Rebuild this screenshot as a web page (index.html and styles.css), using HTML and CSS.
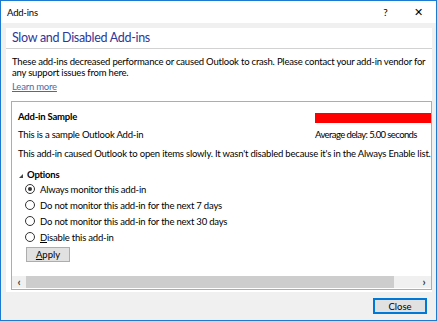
FILE: index.html
```html
<!DOCTYPE html>
<html lang="en">
<head>
    <meta charset="UTF-8">
    <title>Add-ins</title>
    <link rel="stylesheet" href="styles.css">
</head>
<body>
    <div class="window">
        <div class="titlebar">
            <span class="title">Add-ins</span>
            <span class="title-btn">?</span>
            <span class="title-btn close-x">&#x2715;</span>
        </div>

        <div class="content">
            <div class="panel">
                <h1>Slow and Disabled Add-ins</h1>
                <div class="intro">
                    <p>These add-ins decreased performance or caused Outlook to crash. Please contact your add-in vendor for any support issues from here.</p>
                    <a href="#" class="learn">Learn more</a>
                </div>

                <div class="list">
                    <div class="list-view">
                        <div class="item">
                            <div class="item-head">
                                <div class="item-name">
                                    <div class="name">Add-in Sample</div>
                                    <div class="desc">This is a sample Outlook Add-in</div>
                                </div>
                                <div class="delay">
                                    <div class="delay-bar"></div>
                                    <div class="delay-text">Average delay: 5.00 seconds</div>
                                </div>
                            </div>
                            <p class="reason">This add-in caused Outlook to open items slowly. It wasn't disabled because it's in the Always Enable list.</p>

                            <div class="options-head">
                                <span class="tri"></span>
                                <span>Options</span>
                            </div>
                            <div class="options">
                                <label class="radio"><span class="dot checked"></span>Always monitor this add-in</label>
                                <label class="radio"><span class="dot"></span>Do not monitor this add-in for the next 7 days</label>
                                <label class="radio"><span class="dot"></span>Do not monitor this add-in for the next 30 days</label>
                                <label class="radio"><span class="dot"></span><u>D</u>isable this add-in</label>
                            </div>
                            <button class="apply"><u>A</u>pply</button>
                        </div>
                    </div>

                    <div class="hscroll">
                        <span class="arrow">&#x2039;</span>
                        <span class="thumb"></span>
                        <span class="track"></span>
                        <span class="arrow">&#x203A;</span>
                    </div>
                </div>
            </div>

            <div class="footer">
                <button class="close-btn">Close</button>
            </div>
        </div>
    </div>
</body>
</html>
```

FILE: styles.css
```css
/* Окно */
body {
    margin: 0;
    font-family: Lato, "Noto Sans", sans-serif;
    font-size: 9.5px;
    letter-spacing: -0.2px;
    color: #000;
}

.window {
    width: 437px;
    height: 321px;
    box-sizing: border-box;
    border: 1px solid #1c7bd0;
    background: #f0f0f0;
    display: flex;
    flex-direction: column;
}

.titlebar {
    height: 22px;
    background: #fff;
    display: flex;
    align-items: center;
    padding-left: 6px;
    flex-shrink: 0;
}

.title {
    flex: 1;
}

.title-btn {
    width: 33px;
    text-align: center;
    font-size: 10px;
}

.close-x {
    font-size: 11px;
    margin-right: 1px;
}

/* Содержимое */
.content {
    flex: 1;
    display: flex;
    flex-direction: column;
    padding: 5px 4px 0 5px;
}

.panel {
    height: 264px;
    box-sizing: border-box;
    background: #fff;
    display: flex;
    flex-direction: column;
}

h1 {
    margin: 0;
    padding: 0 6px;
    font-size: 12.5px;
    letter-spacing: -0.3px;
    line-height: 20px;
    font-weight: normal;
    color: #2f3699;
    border-bottom: 1px solid #d2d2d2;
}

.intro {
    padding: 7px 6px 0;
    line-height: 11px;
}

.intro p {
    margin: 0;
}

.learn {
    display: inline-block;
    margin-top: 3px;
    color: #3d6fb0;
}

/* Список */
.list {
    flex: 1;
    margin: 9px 0 2px 5px;
    border: 1px solid #adadad;
    display: flex;
    flex-direction: column;
    overflow: hidden;
}

.list-view {
    flex: 1;
    overflow: hidden;
    padding: 9px 0 0 6px;
}

.item {
    width: 480px;
}

.item-head {
    display: flex;
}

.item-name {
    width: 297px;
}

.name {
    font-weight: bold;
}

.desc {
    margin-top: 7px;
}

.delay {
    padding-top: 2px;
}

.delay-bar {
    width: 160px;
    height: 10px;
    background: #ff0000;
}

.delay-text {
    margin-top: 6px;
    letter-spacing: -0.6px;
}

.reason {
    margin: 8px 0 0;
}

.options-head {
    margin-top: 10px;
    display: flex;
    align-items: center;
    font-weight: bold;
}

.tri {
    width: 0;
    height: 0;
    margin: 2px 4px 0 1px;
    border-left: 4px solid transparent;
    border-bottom: 4px solid #444;
}

.options {
    margin: 1px 0 0 7px;
}

.radio {
    display: flex;
    align-items: center;
    height: 16px;
}

.dot {
    width: 8px;
    height: 8px;
    border: 1px solid #333;
    border-radius: 50%;
    margin-right: 5px;
    position: relative;
}

.dot.checked::after {
    content: "";
    position: absolute;
    left: 2px;
    top: 2px;
    width: 4px;
    height: 4px;
    border-radius: 50%;
    background: #333;
}

.apply {
    margin: 2px 0 0 8px;
    width: 44px;
    height: 15px;
    padding: 0;
    border: 1px solid #adadad;
    background: #e1e1e1;
    font-family: inherit;
    font-size: 9.5px;
    color: #000;
}

/* Горизонтальная прокрутка */
.hscroll {
    height: 12px;
    display: flex;
    background: #f0f0f0;
    margin-bottom: 1px;
}

.arrow {
    width: 14px;
    text-align: center;
    font-size: 11px;
    line-height: 11px;
    font-weight: bold;
    color: #333;
}

.thumb {
    width: 368px;
    background: #cdcdcd;
}

.track {
    flex: 1;
}

/* Нижняя панель */
.footer {
    flex: 1;
    display: flex;
    justify-content: flex-end;
    padding: 6px 5px 0 0;
}

.close-btn {
    width: 54px;
    height: 16px;
    padding: 0;
    box-sizing: border-box;
    border: 1px solid #0078d7;
    box-shadow: inset 0 0 0 1px #0078d7;
    background: #e1e1e1;
    font-family: inherit;
    font-size: 9.5px;
}
```
